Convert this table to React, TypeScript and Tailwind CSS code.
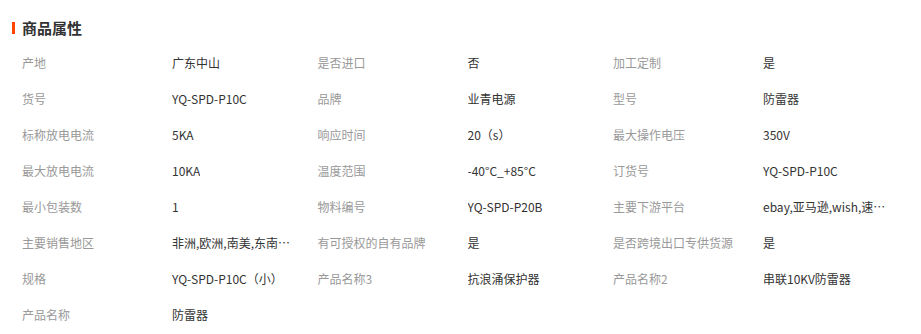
const rows: [string, string][][] = [
  [
    ['产地', '广东中山'],
    ['是否进口', '否'],
    ['加工定制', '是'],
  ],
  [
    ['货号', 'YQ-SPD-P10C'],
    ['品牌', '业青电源'],
    ['型号', '防雷器'],
  ],
  [
    ['标称放电电流', '5KA'],
    ['响应时间', '20（s）'],
    ['最大操作电压', '350V'],
  ],
  [
    ['最大放电电流', '10KA'],
    ['温度范围', '-40°C_+85°C'],
    ['订货号', 'YQ-SPD-P10C'],
  ],
  [
    ['最小包装数', '1'],
    ['物料编号', 'YQ-SPD-P20B'],
    ['主要下游平台', 'ebay,亚马逊,wish,速卖通,独立站,LAZADA'],
  ],
  [
    ['主要销售地区', '非洲,欧洲,南美,东南亚,北美,东北亚,中东'],
    ['有可授权的自有品牌', '是'],
    ['是否跨境出口专供货源', '是'],
  ],
  [
    ['规格', 'YQ-SPD-P10C（小）'],
    ['产品名称3', '抗浪涌保护器'],
    ['产品名称2', '串联10KV防雷器'],
  ],
  [['产品名称', '防雷器']],
];

function Attr(props: { label: string; value: string }) {
  const { label, value } = props;
  return (
    <div className="flex h-[36px] w-[295.5px] items-center">
      <div className="w-[150px] shrink-0 whitespace-nowrap text-[#999]">{label}</div>
      <div className="max-w-[127px] truncate text-[#333]">{value}</div>
    </div>
  );
}

export default function App() {
  return (
    <div
      className="h-[334px] w-[921px] bg-white text-[12px] leading-[16px]"
      style={{ fontFamily: '"Noto Sans CJK SC", "Liberation Sans", sans-serif' }}
    >
      {/* title */}
      <div className="flex h-[45px] items-center pl-[12px] pt-[11px]">
        <span className="mr-[7px] h-[12px] w-[3px] bg-[#ff4400]" />
        <h2 className="text-[15px] font-bold text-[#333]">商品属性</h2>
      </div>
      <div className="pl-[22px]">
        {rows.map((row, i) => (
          <div key={i} className="flex">
            {row.map(([l, v]) => (
              <Attr key={l} label={l} value={v} />
            ))}
          </div>
        ))}
      </div>
    </div>
  );
}
